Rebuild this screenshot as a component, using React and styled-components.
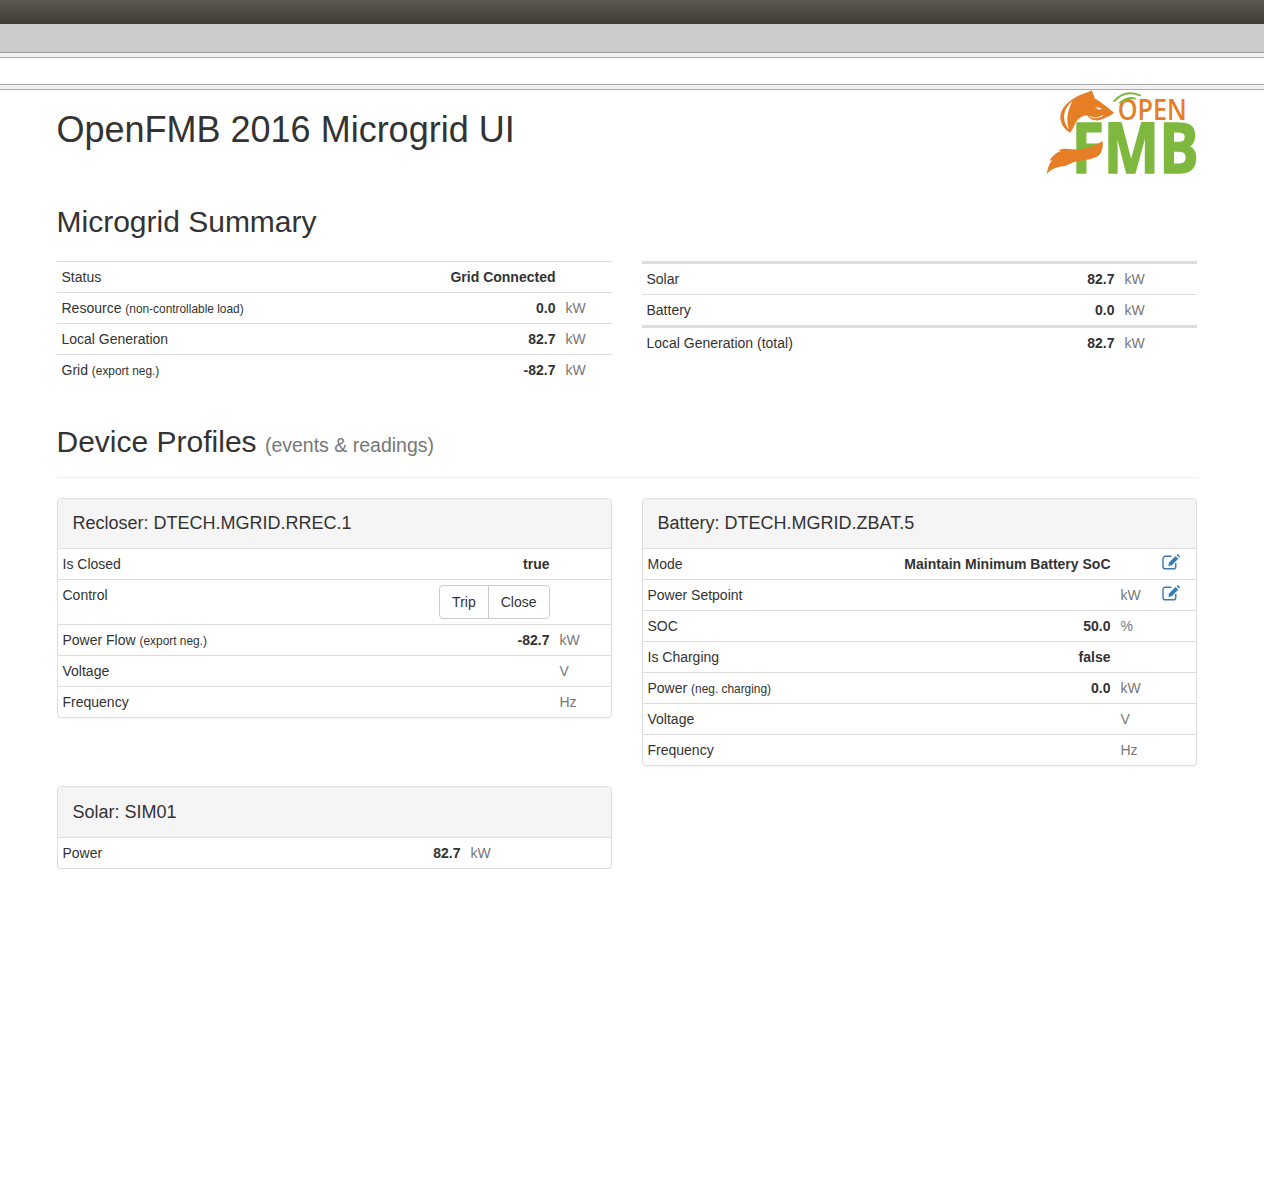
import React from "react";
import styled, { createGlobalStyle } from "styled-components";

const GlobalStyle = createGlobalStyle`
  * { box-sizing: border-box; }
  body {
    margin: 0;
    background: #fff;
    color: #333;
    font-family: "Liberation Sans", Arial, sans-serif;
    font-size: 14px;
    line-height: 20px;
  }
`;

// Browser chrome strips at the top
const TopBar = styled.div`
  height: 24px;
  background: linear-gradient(#5e5a51, #3d3c36);
`;

const GreyBar = styled.div`
  height: 29px;
  background: #ccc;
  border-bottom: 1px solid #999;
`;

const Rule = styled.div`
  height: 5px;
  background: #f2f2f2;
  border-bottom: 1px solid #aaa;
`;

const NavGap = styled.div`
  height: 27px;
  border-bottom: 1px solid #aaa;
`;

const Container = styled.div`
  width: 1140px;
  margin-left: 56.5px;
`;

const Header = styled.div`
  display: flex;
  justify-content: space-between;
  align-items: flex-start;
  height: 96px;
`;

const Title = styled.h1`
  margin: 20px 0 0;
  font-size: 36px;
  font-weight: 500;
  line-height: 40px;
`;

const Logo = styled.svg`
  width: 150px;
  height: 86px;
  display: block;
  overflow: visible;
`;

const SectionTitle = styled.h2`
  margin: 19px 0 23px;
  font-size: 30px;
  font-weight: 500;
  line-height: 33px;
`;

const Columns = styled.div`
  display: grid;
  grid-template-columns: 555px 555px;
  column-gap: 30px;
  row-gap: 20px;
  align-items: start;
`;

const PageHeader = styled.div`
  margin-top: 40px;
  padding-bottom: 19px;
  border-bottom: 1px solid #eee;
  margin-bottom: 20px;
`;

const PageTitle = styled.h2`
  margin: 0;
  font-size: 30px;
  font-weight: 500;
  line-height: 33px;
`;

const PageSmall = styled.small`
  font-size: 65%;
  font-weight: 400;
  line-height: 1;
  color: #777;
`;

const Table = styled.table`
  width: 100%;
  border-collapse: separate;
  border-spacing: 0;
`;

const Row = styled.tr`
  & > td {
    border-top: ${(p) => (p.$heavy ? "3px solid #ddd" : "1px solid #ddd")};
    height: ${(p) => (p.$heavy ? "33px" : "31px")};
  }
  ${(p) => p.$first && "& > td { border-top: none; height: 30px; }"}
`;

const Label = styled.td`
  padding: 5px;
  width: 100%;
  vertical-align: top;
  white-space: nowrap;
`;

const Note = styled.small`
  font-size: 85%;
  line-height: 1;
`;

const Value = styled.td`
  padding: 5px;
  font-weight: 700;
  text-align: right;
  white-space: nowrap;
  vertical-align: top;
`;

const Unit = styled.td`
  padding: 5px;
  color: #777;
  min-width: ${(p) => p.$w}px;
  width: ${(p) => p.$w}px;
  vertical-align: top;
`;

const EditCell = styled.td`
  padding: 0 16px 0 0;
  width: 34px;
  min-width: 34px;
  vertical-align: top;
  line-height: 0;
`;

const EditIcon = styled.svg`
  width: 18px;
  height: 16px;
  margin-top: 5px;
  display: block;
`;

const Panel = styled.div`
  border: 1px solid #ddd;
  border-radius: 4px;
  background: #fff;
  box-shadow: 0 1px 1px rgba(0, 0, 0, 0.05);
  overflow: hidden;
`;

const PanelHeading = styled.div`
  padding: ${(p) => (p.$tall ? "15px" : "14px")} 15px 15px;
  height: ${(p) => (p.$tall ? 51 : 50)}px;
  background: #f5f5f5;
  border-bottom: 1px solid #ddd;
  font-size: 18px;
  line-height: 20px;
`;

const BtnGroup = styled.div`
  display: inline-flex;
  vertical-align: top;
`;

const Btn = styled.button`
  height: 34px;
  padding: 6px 12px;
  font: inherit;
  font-weight: 400;
  color: #333;
  background: #fff;
  border: 1px solid #ccc;
  margin-left: ${(p) => (p.$last ? "-1px" : "0")};
  border-radius: ${(p) => (p.$last ? "0 4px 4px 0" : "4px 0 0 4px")};
`;

const PencilBox = () => (
  <EditIcon viewBox="0 0 18 16" aria-hidden="true">
    <path
      d="M9.5 2.2H3.4C2 2.2 1 3.2 1 4.6v7.8c0 1.4 1 2.4 2.4 2.4h8c1.4 0 2.4-1 2.4-2.4V9"
      fill="none"
      stroke="#337ab7"
      strokeWidth="1.4"
    />
    <path d="M7 8.6 13.6 2l2.7 2.7-6.6 6.6-3.3.7z" fill="#337ab7" />
    <path d="M14.5 1.1 15.2.5c.4-.3.9-.3 1.2 0l1.2 1.2c.3.3.3.8 0 1.2l-.6.7z" fill="#337ab7" />
  </EditIcon>
);

const OpenFmbLogo = () => (
  <Logo viewBox="6 12 450 258" role="img" aria-label="OpenFMB">
    <text
      transform="translate(80 262) scale(0.83 1)"
      fill="#7fb83e"
      stroke="#7fb83e"
      strokeWidth="5"
      strokeLinejoin="round"
      fontFamily="'Open Sans', sans-serif"
      fontWeight="700"
      fontSize="212"
    >
      FMB
    </text>
    <g fill="#e57e25">
      <path d="M140 12 150 38C165 45 185 62 207 80 198 90 180 95 165 102 150 106 135 100 128 90 120 85 100 95 92 110 85 125 80 135 75 140 55 130 42 105 47 85 50 65 70 45 95 32 115 22 130 20 140 12Z" />
      <path d="M5 264C8 247 12 234 22 222L13 224C22 209 35 199 48 195L40 193C55 187 65 188 78 190 110 192 145 185 172 165 176 182 171 198 160 210 140 222 110 222 88 228 75 232 70 238 55 241 35 243 18 250 5 264Z" />
      <text
        transform="translate(218 103) scale(0.9 1)"
        fontFamily="'Open Sans', sans-serif"
        fontWeight="600"
        fontSize="84"
      >
        OPEN
      </text>
    </g>
    <path d="M82 46C58 64 46 100 72 130 62 102 68 74 82 46Z" fill="#fff" />
    <path d="M150 62 172 68 160 71Z" fill="#fff" />
    <path d="M134 91C146 98 160 96 174 88" fill="none" stroke="#fff" strokeWidth="3" />
    <g fill="none" stroke="#7fb83e" strokeWidth="6" strokeLinecap="round">
      <path d="M208 45Q240 10 285 28" />
      <path d="M225 50Q250 30 270 38" />
    </g>
  </Logo>
);

const DataRow = ({ label, note, value, unit, w, first, heavy }) => (
  <Row $first={first} $heavy={heavy}>
    <Label>
      {label} {note && <Note>{note}</Note>}
    </Label>
    <Value>{value}</Value>
    <Unit $w={w}>{unit}</Unit>
  </Row>
);

const BatteryRow = ({ label, note, value, unit, edit, first }) => (
  <Row $first={first}>
    <Label>
      {label} {note && <Note>{note}</Note>}
    </Label>
    <Value>{value}</Value>
    <Unit $w={46}>{unit}</Unit>
    <EditCell>{edit && <PencilBox />}</EditCell>
  </Row>
);

export default function App() {
  return (
    <>
      <GlobalStyle />
      <TopBar />
      <GreyBar />
      <Rule />
      <NavGap />
      <Rule />
      <Container>
        <Header>
          <Title>OpenFMB 2016 Microgrid UI</Title>
          <OpenFmbLogo />
        </Header>
        <SectionTitle>Microgrid Summary</SectionTitle>
        <Columns>
          <Table>
            <tbody>
              <DataRow label="Status" value="Grid Connected" w={51} />
              <DataRow label="Resource" note="(non-controllable load)" value="0.0" unit="kW" w={51} />
              <DataRow label="Local Generation" value="82.7" unit="kW" w={51} />
              <DataRow label="Grid" note="(export neg.)" value="-82.7" unit="kW" w={51} />
            </tbody>
          </Table>
          <Table>
            <tbody>
              <DataRow heavy label="Solar" value="82.7" unit="kW" w={77} />
              <DataRow label="Battery" value="0.0" unit="kW" w={77} />
              <DataRow heavy label="Local Generation (total)" value="82.7" unit="kW" w={77} />
            </tbody>
          </Table>
        </Columns>
        <PageHeader>
          <PageTitle>
            Device Profiles <PageSmall>(events &amp; readings)</PageSmall>
          </PageTitle>
        </PageHeader>
        <Columns>
          <Panel>
            <PanelHeading>Recloser: DTECH.MGRID.RREC.1</PanelHeading>
            <Table>
              <tbody>
                <DataRow first label="Is Closed" value="true" w={56} />
                <Row>
                  <Label>Control</Label>
                  <Value>
                    <BtnGroup>
                      <Btn>Trip</Btn>
                      <Btn $last>Close</Btn>
                    </BtnGroup>
                  </Value>
                  <Unit $w={56} />
                </Row>
                <DataRow label="Power Flow" note="(export neg.)" value="-82.7" unit="kW" w={56} />
                <DataRow label="Voltage" unit="V" w={56} />
                <DataRow label="Frequency" unit="Hz" w={56} />
              </tbody>
            </Table>
          </Panel>
          <Panel>
            <PanelHeading>Battery: DTECH.MGRID.ZBAT.5</PanelHeading>
            <Table>
              <tbody>
                <BatteryRow first label="Mode" value="Maintain Minimum Battery SoC" edit />
                <BatteryRow label="Power Setpoint" unit="kW" edit />
                <BatteryRow label="SOC" value="50.0" unit="%" />
                <BatteryRow label="Is Charging" value="false" />
                <BatteryRow label="Power" note="(neg. charging)" value="0.0" unit="kW" />
                <BatteryRow label="Voltage" unit="V" />
                <BatteryRow label="Frequency" unit="Hz" />
              </tbody>
            </Table>
          </Panel>
          <Panel>
            <PanelHeading $tall>Solar: SIM01</PanelHeading>
            <Table>
              <tbody>
                <DataRow first label="Power" value="82.7" unit="kW" w={145} />
              </tbody>
            </Table>
          </Panel>
        </Columns>
      </Container>
    </>
  );
}
